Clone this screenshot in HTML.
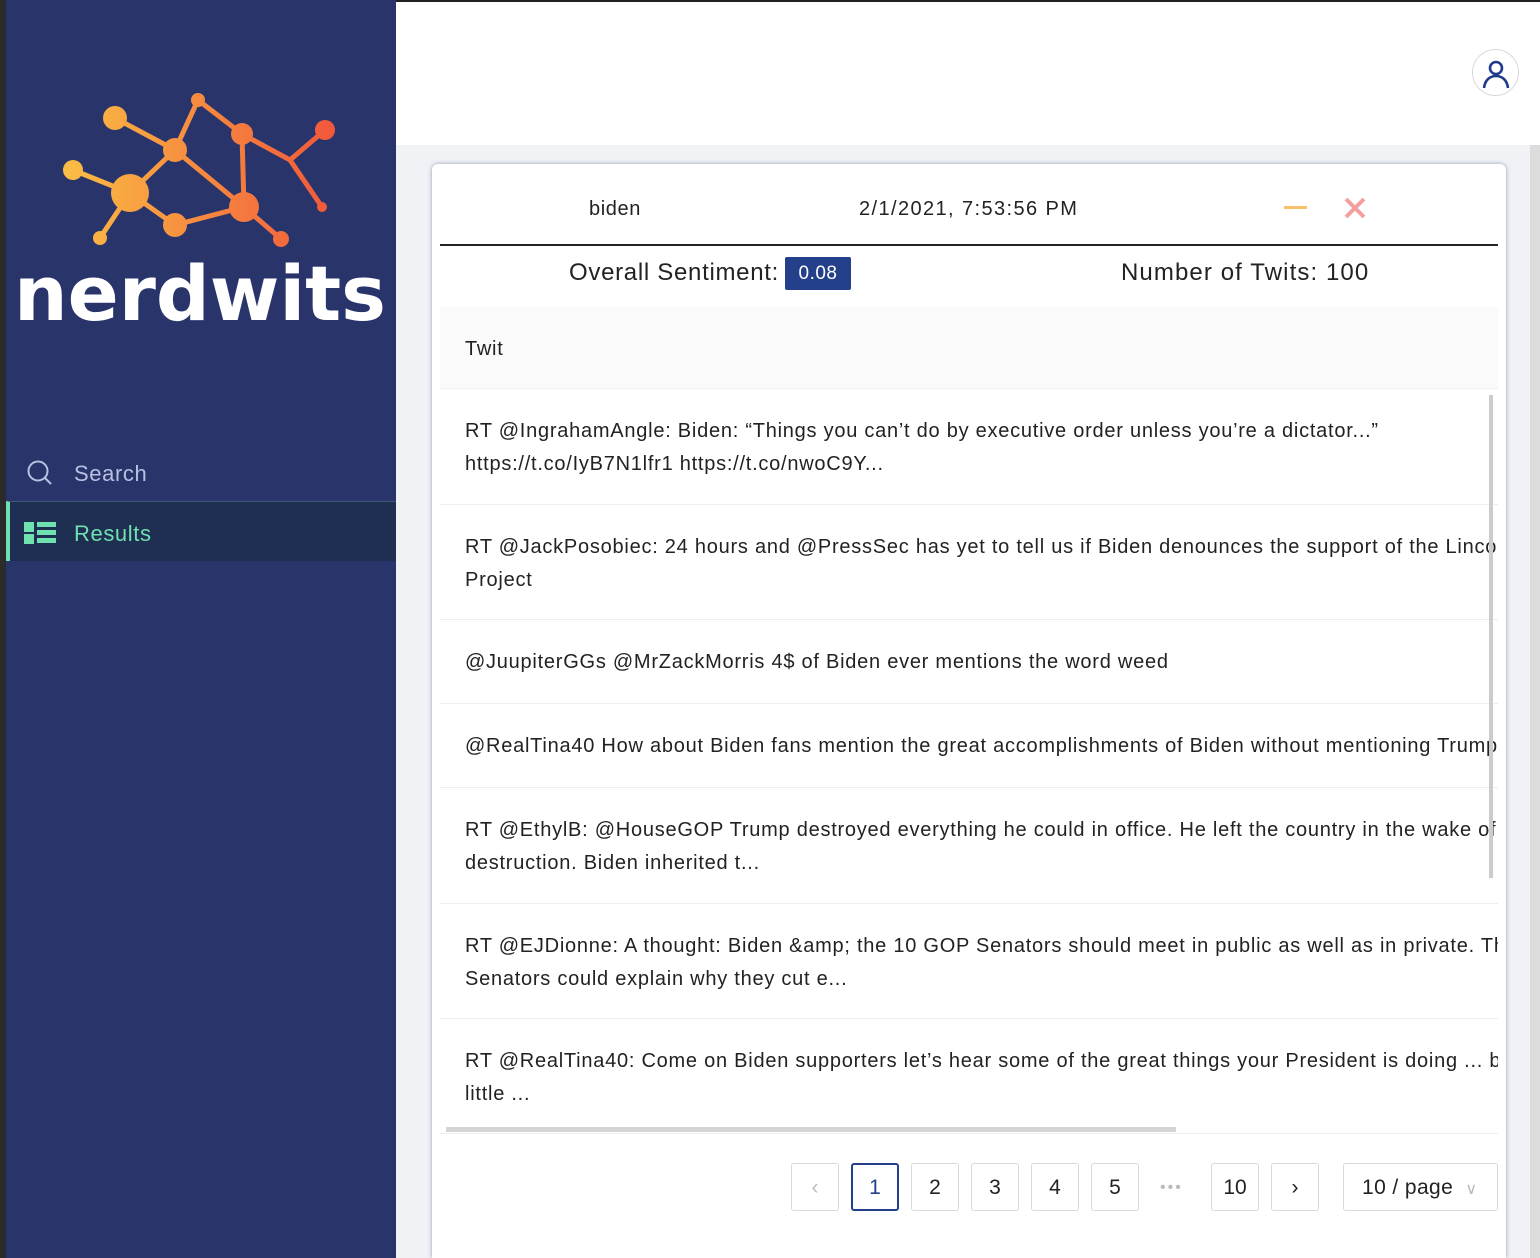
<!DOCTYPE html>
<html style="overflow:hidden"><head><meta charset="utf-8"><style>
*{box-sizing:border-box;margin:0;padding:0}
html,body{width:1540px;height:1258px;overflow:hidden}
body{font-family:"Liberation Sans",sans-serif;background:#f0f2f5;position:relative;color:#222}
.strip{position:absolute;left:0;top:0;width:6px;height:1258px;background:#2b2b2b}
.side{position:absolute;left:6px;top:0;width:390px;height:1258px;background:#29346b}
.top{position:absolute;left:396px;top:0;width:1144px;height:145px;background:#fff;border-top:2px solid #222}
.avatar{position:absolute;left:1472px;top:49px;width:47px;height:47px;border-radius:50%;border:1px solid #d9d9d9;background:#fff}
.card{position:absolute;left:432px;top:164px;width:1074px;height:1094px;background:#fff;border-radius:6px 6px 0 0;box-shadow:0 0 4px rgba(60,70,110,.5)}
.abs{position:absolute}
.row{position:absolute;left:440px;width:1058px;border-bottom:1px solid #eee;font-size:20px;line-height:33px;padding-left:25px;white-space:nowrap;overflow:hidden;letter-spacing:.75px}
.pg{position:absolute;top:1163px;width:48px;height:48px;border:1px solid #d9d9d9;border-radius:3px;font-size:21px;text-align:center;line-height:48px;background:#fff}
</style></head><body>
<div class="strip"></div>
<div class="side">
<svg width="390" height="340" style="position:absolute;left:-6px;top:0">
<defs><linearGradient id="g" x1="60" x2="340" y1="0" y2="0" gradientUnits="userSpaceOnUse"><stop offset="0" stop-color="#fbbf45"/><stop offset="1" stop-color="#f1553a"/></linearGradient></defs>
<g stroke="url(#g)" stroke-width="5" fill="none">
<path d="M115 118L175 150L198 100L242 134L290 160L325 130M290 160L322 207M242 134L244 207L175 150L130 193L73 170M130 193L100 238M130 193L175 225L244 207L281 239"/></g>
<g fill="url(#g)">
<circle cx="115" cy="118" r="12"/><circle cx="198" cy="100" r="7"/><circle cx="242" cy="134" r="11"/><circle cx="325" cy="130" r="10"/><circle cx="175" cy="150" r="12"/><circle cx="73" cy="170" r="10"/><circle cx="130" cy="193" r="19"/><circle cx="175" cy="225" r="12"/><circle cx="244" cy="207" r="15"/><circle cx="100" cy="238" r="7"/><circle cx="281" cy="239" r="8"/><circle cx="322" cy="207" r="5"/></g>
<text x="14" y="320" fill="#fff" font-family="DejaVu Sans" font-weight="bold" font-size="76" textLength="372" lengthAdjust="spacingAndGlyphs">nerdwits</text>
</svg>
<svg class="abs" style="left:20px;top:459px" width="28" height="28"><circle cx="12" cy="12" r="9.5" stroke="#b8c0e0" stroke-width="2" fill="none"/><path d="M19 19L25 25" stroke="#b8c0e0" stroke-width="2"/></svg>
<div class="abs" style="left:68px;top:461px;font-size:22px;color:#b8c0e0;letter-spacing:.6px">Search</div>
<div class="abs" style="left:0;top:501px;width:390px;height:60px;background:#1f2f52;border-top:1px solid #3a5a78;border-left:4px solid #6fe0b0"></div>
<svg class="abs" style="left:18px;top:520px" width="34" height="26" fill="#6fe0b0"><rect x="0" y="2" width="10" height="10"/><rect x="0" y="14" width="10" height="10"/><rect x="13" y="2" width="19" height="5"/><rect x="13" y="10" width="19" height="5"/><rect x="13" y="18" width="19" height="5"/></svg>
<div class="abs" style="left:68px;top:521px;font-size:22px;color:#6fe0b0;letter-spacing:.6px">Results</div>
</div>
<div class="top"></div>
<div class="avatar"><svg width="45" height="45"><circle cx="23" cy="18" r="6" stroke="#1f3a8a" stroke-width="2.6" fill="none"/><path d="M11 38C12 29 18 26 23 26S34 29 35 38" stroke="#1f3a8a" stroke-width="2.6" fill="none"/></svg></div>
<div class="abs" style="left:1530px;top:145px;width:10px;height:1113px;background:#dcdcdc"></div>
<div class="card"></div>
<div class="abs" style="left:589px;top:198px;font-size:20px;letter-spacing:.6px">biden</div>
<div class="abs" style="left:859px;top:198px;font-size:20px;letter-spacing:1.4px">2/1/2021, 7:53:56 PM</div>
<div class="abs" style="left:1284px;top:206px;width:23px;height:3px;background:#fcc06a"></div>
<svg class="abs" style="left:1343px;top:196px" width="24" height="24"><path d="M3 3L21 21M21 3L3 21" stroke="#f4a0a0" stroke-width="4"/></svg>
<div class="abs" style="left:440px;top:244px;width:1058px;height:2px;background:#222"></div>
<div class="abs" style="left:569px;top:259px;font-size:24px;letter-spacing:.7px">Overall Sentiment:</div>
<div class="abs" style="left:785px;top:257px;width:66px;height:33px;background:#25408a;border-radius:2px;color:#fff;font-size:19px;text-align:center;line-height:33px;letter-spacing:.5px">0.08</div>
<div class="abs" style="left:1121px;top:259px;font-size:24px;letter-spacing:1.1px">Number of Twits: 100</div>
<div class="row" style="top:307px;height:82px;background:#fafafa;line-height:84px">Twit</div>
<div class="row" style="top:389px;height:116px;padding-top:26px">RT @IngrahamAngle: Biden: “Things you can’t do by executive order unless you’re a dictator...”<br>https://t.co/IyB7N1lfr1 https://t.co/nwoC9Y...</div>
<div class="row" style="top:505px;height:115px;padding-top:26px">RT @JackPosobiec: 24 hours and @PressSec has yet to tell us if Biden denounces the support of the Lincoln<br>Project</div>
<div class="row" style="top:620px;height:84px;padding-top:26px">@JuupiterGGs @MrZackMorris 4$ of Biden ever mentions the word weed</div>
<div class="row" style="top:704px;height:84px;padding-top:26px">@RealTina40 How about Biden fans mention the great accomplishments of Biden without mentioning Trump</div>
<div class="row" style="top:788px;height:116px;padding-top:26px">RT @EthylB: @HouseGOP Trump destroyed everything he could in office. He left the country in the wake of<br>destruction. Biden inherited t...</div>
<div class="row" style="top:904px;height:115px;padding-top:26px">RT @EJDionne: A thought: Biden &amp;amp; the 10 GOP Senators should meet in public as well as in private. The<br>Senators could explain why they cut e...</div>
<div class="row" style="top:1019px;height:115px;padding-top:26px">RT @RealTina40: Come on Biden supporters let’s hear some of the great things your President is doing ... but<br>little ...</div>
<div class="abs" style="left:1489px;top:395px;width:4px;height:483px;background:#ccc"></div>
<div class="abs" style="left:446px;top:1127px;width:730px;height:5px;background:#d4d4d4"></div>
<div class="pg" style="left:791px;color:#bbb">‹</div>
<div class="pg" style="left:851px;border:2px solid #25408a;color:#25408a;line-height:46px">1</div>
<div class="pg" style="left:911px">2</div>
<div class="pg" style="left:971px">3</div>
<div class="pg" style="left:1031px">4</div>
<div class="pg" style="left:1091px">5</div>
<div class="abs" style="left:1160px;top:1179px;color:#bbb;font-size:16px;letter-spacing:2px">•••</div>
<div class="pg" style="left:1211px">10</div>
<div class="pg" style="left:1271px">›</div>
<div class="pg" style="left:1343px;width:155px;text-align:left;padding-left:18px;letter-spacing:.4px">10 / page <span style="color:#bbb;font-size:16px;margin-left:6px">∨</span></div>
</body></html>
